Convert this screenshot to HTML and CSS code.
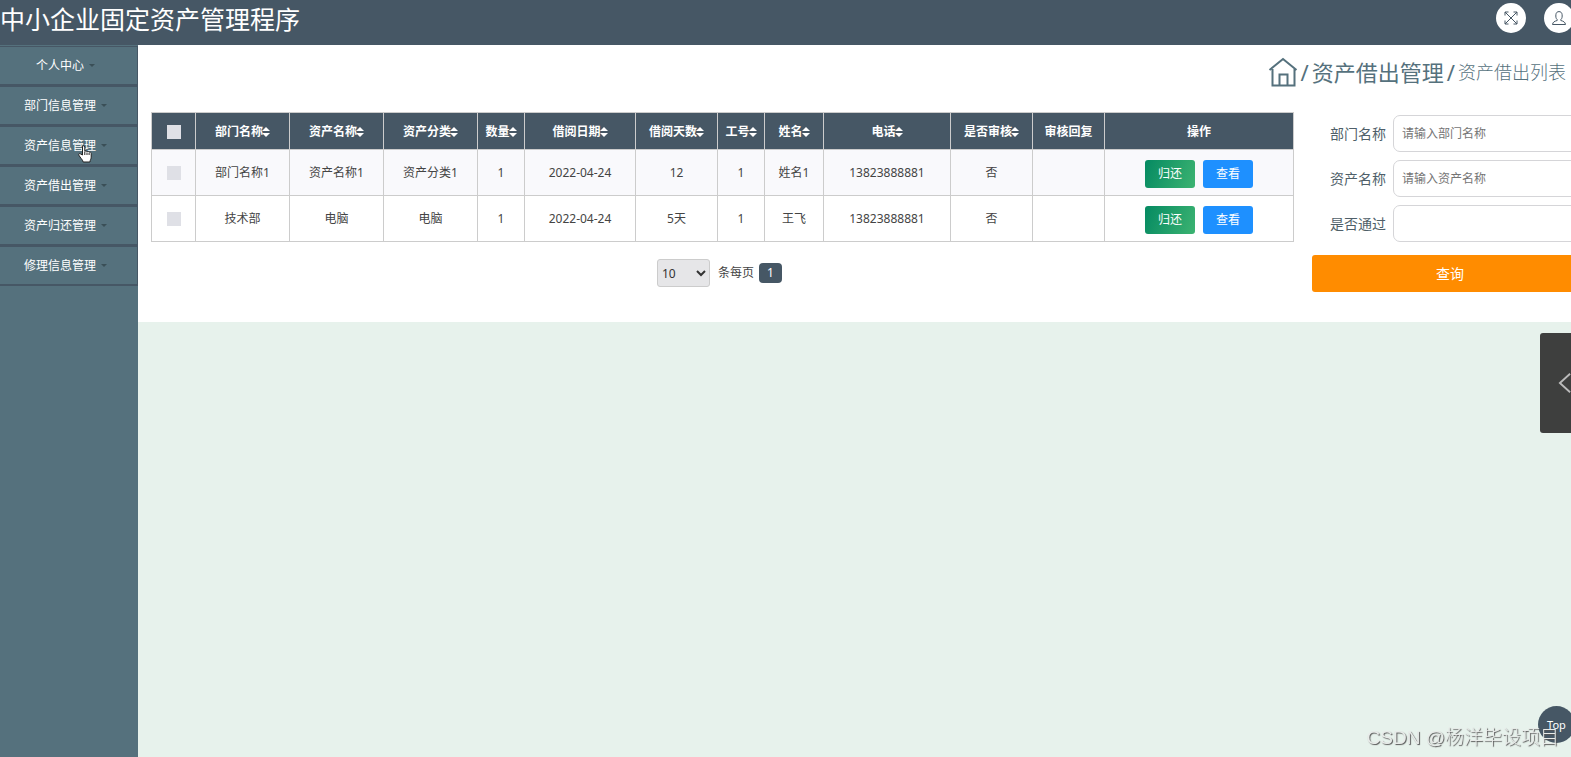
FILE: index.html
```html
<!DOCTYPE html>
<html lang="zh-CN">
<head>
<meta charset="utf-8">
<title>中小企业固定资产管理程序</title>
<link rel="stylesheet" href="styles.css">
</head>
<body>
<header class="topbar">
  <h1 class="brand">中小企业固定资产管理程序</h1>
  <div class="tools">
    <button class="round" type="button" aria-label="全屏">
      <svg class="tool-icon" viewBox="0 0 14 14"><path d="M1 1l12 12M13 1L1 13M1 4.500V1h3.500M9.500 1H13v3.500M13 9.500V13H9.500M4.500 13H1V9.500"/></svg>
    </button>
    <button class="round" type="button" aria-label="用户">
      <svg class="tool-icon" viewBox="0 0 14 14"><path d="M5.200 8.600C3.800 7.500 3.700 5.500 3.900 3.600 4.100 1.700 5.200.6 7 .6s2.900 1.100 3.100 3c.2 1.900.1 3.900-1.300 5v.9c2.500.7 4.400 1.500 4.700 4H.5c.3-2.500 2.200-3.300 4.700-4z"/></svg>
    </button>
  </div>
</header>
<div class="layout">
  <nav class="sidebar">
    <button class="menu" type="button">个人中心<span class="caret"></span></button>
    <button class="menu" type="button">部门信息管理<span class="caret"></span></button>
    <button class="menu" type="button">资产信息管理<span class="caret"></span></button>
    <button class="menu" type="button">资产借出管理<span class="caret"></span></button>
    <button class="menu" type="button">资产归还管理<span class="caret"></span></button>
    <button class="menu" type="button">修理信息管理<span class="caret"></span></button>
  </nav>
  <main class="content">
    <section class="panel">
      <div class="crumbs">
        <a class="home" href="#" aria-label="首页"><svg class="home-icon" viewBox="0 0 30 30"><path d="M1.500 13L15 2l13.500 11M4.500 12v16.500h22V12M11.500 28V17.500h8V28"/></svg></a>
        <span>/</span><span>资产借出管理</span><span>/</span><span class="current">资产借出列表</span>
      </div>
      <div class="columns">
        <div class="list">
          <table class="grid">
            <colgroup><col class="w-check"><col class="w-name"><col class="w-name"><col class="w-name"><col class="w-num"><col class="w-date"><col class="w-days"><col class="w-num"><col class="w-person"><col class="w-phone"><col class="w-days"><col class="w-reply"><col class="w-action"></colgroup>
            <thead>
              <tr>
                <th><input class="tick" type="checkbox" aria-label="全选"></th>
                <th>部门名称<span class="sort"></span></th>
                <th>资产名称<span class="sort"></span></th>
                <th>资产分类<span class="sort"></span></th>
                <th>数量<span class="sort"></span></th>
                <th>借阅日期<span class="sort"></span></th>
                <th>借阅天数<span class="sort"></span></th>
                <th>工号<span class="sort"></span></th>
                <th>姓名<span class="sort"></span></th>
                <th>电话<span class="sort"></span></th>
                <th>是否审核<span class="sort"></span></th>
                <th>审核回复</th>
                <th>操作</th>
              </tr>
            </thead>
            <tbody>
              <tr>
                <td><input class="tick" type="checkbox" aria-label="选择第1行"></td>
                <td>部门名称1</td><td>资产名称1</td><td>资产分类1</td><td>1</td><td>2022-04-24</td><td>12</td><td>1</td><td>姓名1</td><td>13823888881</td><td>否</td><td></td>
                <td><div class="actions"><button class="btn give-back" type="button">归还</button><button class="btn view" type="button">查看</button></div></td>
              </tr>
              <tr>
                <td><input class="tick" type="checkbox" aria-label="选择第2行"></td>
                <td>技术部</td><td>电脑</td><td>电脑</td><td>1</td><td>2022-04-24</td><td>5天</td><td>1</td><td>王飞</td><td>13823888881</td><td>否</td><td></td>
                <td><div class="actions"><button class="btn give-back" type="button">归还</button><button class="btn view" type="button">查看</button></div></td>
              </tr>
            </tbody>
          </table>
          <div class="pager">
            <select class="size" id="size"><option>10</option></select>
            <label for="size">条每页</label>
            <button class="page" type="button">1</button>
          </div>
        </div>
        <form class="search">
          <div class="field"><label for="dept">部门名称</label><input class="box" id="dept" type="text" placeholder="请输入部门名称"></div>
          <div class="field"><label for="asset">资产名称</label><input class="box" id="asset" type="text" placeholder="请输入资产名称"></div>
          <div class="field"><label for="pass">是否通过</label><select class="box" id="pass"><option></option></select></div>
          <button class="submit" type="button">查询</button>
        </form>
      </div>
    </section>
  </main>
</div>
<button class="drawer" type="button" aria-label="展开"><svg class="drawer-icon" viewBox="0 0 14 22"><path d="M13 1L2 11l11 10"/></svg></button>
<button class="to-top" type="button">Top</button>
<div class="watermark">CSDN @杨洋毕设项目</div>
<svg class="pointer" viewBox="0 0 14 18"><path d="M4.500 10V2c0-1.800 2.300-1.800 2.300 0v4.500c.5-.9 2-.7 2.200.3.600-.7 2-.4 2.100.5.900-.5 2.100 0 2.100 1.200v3.700c0 1.600-1 2.600-1.300 4.800H5.200C4.600 14.500 2.200 12.800.9 10.200c-.7-1.400.8-2.200 1.800-1.200z"/><path d="M6.800 7v3M9 7.500V10M11.100 8v2"/></svg>
</body>
</html>
```

FILE: styles.css
```css
* { box-sizing: border-box; }

body {
  margin: 0;
  min-height: 100vh;
  display: flex;
  flex-direction: column;
  overflow: hidden;
  background: #e7f2ec;
  color: #444;
  font: 12px/20px "Noto Sans", "Noto Sans CJK SC", sans-serif;
}

button, input, select { font: inherit; color: inherit; }
button { border: 0; padding: 0; cursor: pointer; }

.topbar {
  display: flex;
  justify-content: space-between;
  height: 45px;
  padding-top: 3px;
  background: #465765;
}
.brand {
  margin: 0;
  color: #fff;
  font-size: 25px;
  font-weight: 400;
  line-height: 32px;
}
.tools { display: flex; gap: 18px; margin-right: -3px; }
.round {
  display: grid;
  place-items: center;
  width: 30px;
  height: 30px;
  border-radius: 50%;
  background: #fff;
}
.tool-icon { width: 14px; height: 14px; fill: none; stroke: #465765; stroke-width: 1; }

.layout { flex: 1; display: flex; }
.sidebar {
  flex: none;
  width: 138px;
  padding-top: 1px;
  background: #55717d;
}
.menu {
  display: flex;
  align-items: center;
  justify-content: center;
  gap: 5px;
  width: 100%;
  height: 40px;
  padding: 0 6px 0 0;
  border: solid #465765;
  border-width: 1px 1px 2px 0;
  background: #55717d;
  color: #fff;
  font-size: 12px;
}
.caret {
  border: 3px solid transparent;
  border-top-color: #3a4f57;
  border-bottom: 0;
}

.content { flex: 1; min-width: 0; }
.panel { padding: 10px 0 30px 13px; background: #fff; }
.crumbs {
  display: flex;
  align-items: center;
  justify-content: flex-end;
  gap: 3px;
  height: 34px;
  padding-right: 5px;
  color: #55717d;
  font-size: 22px;
}
.home { display: flex; }
.home-icon { width: 30px; height: 30px; fill: none; stroke: #55717d; stroke-width: 2; }
.current { font-size: 18px; font-weight: 300; }

.columns {
  display: flex;
  gap: 20px;
  margin: 23px -17px 0 0;
}
.list { flex: 1; min-width: 0; }
.grid {
  width: 100%;
  table-layout: fixed;
  border-collapse: collapse;
  text-align: center;
}
.grid th, .grid td { padding: 0; border: 1px solid #ccc; white-space: nowrap; }
.grid th { height: 37px; padding-top: 1px; background: #465765; color: #fff; font-weight: 700; }
.grid td { height: 46px; }
.grid tbody tr:nth-child(odd) { background: #f9f9fc; }
.w-check { width: 44px; }
.w-name { width: 94px; }
.w-num { width: 47px; }
.w-date { width: 111px; }
.w-days { width: 82px; }
.w-person { width: 59px; }
.w-phone { width: 127px; }
.w-reply { width: 72px; }
.w-action { width: 189px; }

.tick {
  display: block;
  width: 14px;
  height: 14px;
  margin: 0 auto;
  appearance: none;
  background: #dfe0e6;
}
.sort {
  display: inline-grid;
  gap: 2px;
  margin-left: -1px;
  vertical-align: middle;
}
.sort::before, .sort::after { content: ""; border: solid transparent; border-width: 0 4px; }
.sort::before { border-bottom: 4px solid #fff; }
.sort::after { border-top: 4px solid #fff; }

.actions { display: flex; justify-content: center; gap: 8px; padding-top: 2px; }
.btn { width: 50px; height: 28px; border-radius: 3px; color: #fff; }
.give-back { background: linear-gradient(110deg, #058a62, #3cb371); }
.view { background: #1e90ff; }

.pager {
  display: flex;
  align-items: center;
  justify-content: center;
  gap: 5px;
  margin-top: 17px;
  padding-right: 4px;
}
.size {
  width: 53px;
  height: 28px;
  margin-right: 3px;
  padding: 0;
  border: 1px solid #ccc;
  border-radius: 3px;
  background: #e6e6e8;
  color: #333;
}
.page {
  width: 23px;
  height: 20px;
  border-radius: 4px;
  background: #465765;
  color: #fff;
}

.search {
  flex: none;
  display: flex;
  flex-direction: column;
  gap: 8px;
  width: 276px;
  padding-top: 3px;
}
.field {
  display: flex;
  align-items: center;
  gap: 7px;
  padding-left: 18px;
  color: #4f5f69;
  font-size: 14px;
}
.field label { flex: none; }
.box {
  flex: 1;
  min-width: 0;
  height: 37px;
  padding: 0 8px;
  appearance: none;
  border: 1px solid #d5d5d8;
  border-radius: 7px;
  background: #fff;
  font-size: 12px;
}
.box::placeholder { color: #757575; }
.submit {
  height: 37px;
  margin-top: 5px;
  border-radius: 3px;
  background: #ff8c00;
  color: #fff;
  font-size: 14px;
}

.drawer {
  position: fixed;
  top: 333px;
  right: 0;
  display: flex;
  align-items: center;
  justify-content: flex-end;
  width: 31px;
  height: 100px;
  border-radius: 3px 0 0 3px;
  background: #3e3f3e;
}
.drawer-icon { width: 13px; height: 22px; fill: none; stroke: #bbb; stroke-width: 2; }
.to-top {
  position: fixed;
  right: -4px;
  bottom: 14px;
  width: 37px;
  height: 37px;
  border-radius: 50%;
  background: #465765;
  color: #fff;
  font-size: 11px;
}
.watermark {
  position: fixed;
  right: 12px;
  bottom: 4px;
  color: #e8ebe9;
  font: 300 19px/30px "Liberation Sans", "Noto Sans CJK SC", sans-serif;
  text-shadow: 1px 1px 1px #555;
}
.pointer {
  position: fixed;
  left: 78px;
  top: 145px;
  width: 14px;
  height: 18px;
  fill: #fff;
  stroke: #222;
  stroke-width: 1;
}
```
